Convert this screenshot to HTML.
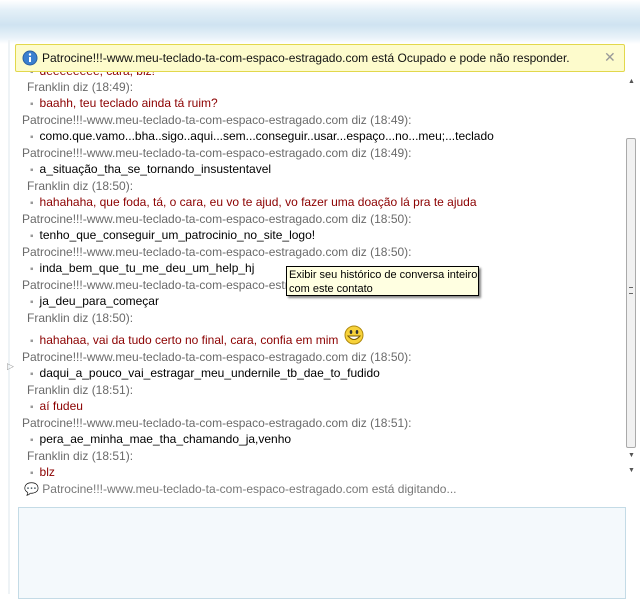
<!DOCTYPE html>
<html><head><meta charset="utf-8"><style>
body{margin:0;width:640px;height:594px;overflow:hidden;background:#fff;font-family:"Liberation Sans",sans-serif;font-size:12px;position:relative}
.top{position:absolute;left:0;top:0;width:640px;height:44px;background:linear-gradient(#fff 0,#e4f0f8 10px,#cfe3f1 25px,#eaf3f9 38px,#fff 44px)}
.lb{position:absolute;left:8px;top:40px;width:2px;height:554px;background:#eef3f6}
.l{position:absolute;white-space:nowrap;line-height:15px}
.h{color:#6a6a6a}
.m{left:30px;color:#000}
.m i{font-style:normal;color:#999;margin-right:6px;font-size:10px}
.r{color:#8b0000}
.bar{position:absolute;left:15px;top:44px;width:608px;height:26px;background:#fdfbcc;border:1px solid #e2d84c;border-radius:2px}
.scroll{position:absolute;left:626px;top:138px;width:8px;height:308px;background:#f1f1f1;border:1px solid #aaa;border-radius:2px}
.tip{position:absolute;left:286px;top:266px;width:193px;height:30px;background:#ffffe1;border:1px solid #000;box-shadow:2px 2px 2px #888;font-size:11px;line-height:14px;padding:1px 0 0 2px;box-sizing:border-box}
.inp{position:absolute;left:18px;top:507px;width:606px;height:90px;background:#f4f9fc;border:1px solid #c4dbe6}
</style></head><body>
<div class="top"></div><div class="lb"></div>
<div class="l m r" style="top:64px"><i>▪</i>deeeeeeee, cara, blz!</div>
<div class="bar"><svg style="position:absolute;left:6px;top:5px" width="16" height="16"><circle cx="8" cy="8" r="7" fill="#3b7fd0" stroke="#2a5fa0"/><rect x="7" y="7" width="2" height="5" fill="#fff"/><circle cx="8" cy="4.5" r="1.2" fill="#fff"/></svg><span style="position:absolute;left:26px;top:6px;color:#111">Patrocine!!!-www.meu-teclado-ta-com-espaco-estragado.com está Ocupado e pode não responder.</span><span style="position:absolute;left:588px;top:4px;color:#999;font-size:14px">✕</span></div>
<div class="l h" style="left:27px;top:80px">Franklin diz (18:49):</div>
<div class="l m r" style="top:96px"><i>▪</i>baahh, teu teclado ainda tá ruim?</div>
<div class="l h" style="left:22px;top:113px">Patrocine!!!-www.meu-teclado-ta-com-espaco-estragado.com diz (18:49):</div>
<div class="l m" style="top:129px"><i>▪</i>como.que.vamo...bha..sigo..aqui...sem...conseguir..usar...espaço...no...meu;...teclado</div>
<div class="l h" style="left:22px;top:146px">Patrocine!!!-www.meu-teclado-ta-com-espaco-estragado.com diz (18:49):</div>
<div class="l m" style="top:162px"><i>▪</i>a_situação_tha_se_tornando_insustentavel</div>
<div class="l h" style="left:27px;top:179px">Franklin diz (18:50):</div>
<div class="l m r" style="top:195px"><i>▪</i>hahahaha, que foda, tá, o cara, eu vo te ajud, vo fazer uma doação lá pra te ajuda</div>
<div class="l h" style="left:22px;top:212px">Patrocine!!!-www.meu-teclado-ta-com-espaco-estragado.com diz (18:50):</div>
<div class="l m" style="top:228px"><i>▪</i>tenho_que_conseguir_um_patrocinio_no_site_logo!</div>
<div class="l h" style="left:22px;top:245px">Patrocine!!!-www.meu-teclado-ta-com-espaco-estragado.com diz (18:50):</div>
<div class="l m" style="top:261px"><i>▪</i>inda_bem_que_tu_me_deu_um_help_hj</div>
<div class="l h" style="left:22px;top:278px">Patrocine!!!-www.meu-teclado-ta-com-espaco-estragado.com diz (18:50):</div>
<div class="l m" style="top:294px"><i>▪</i>ja_deu_para_começar</div>
<div class="l h" style="left:27px;top:311px">Franklin diz (18:50):</div>
<div class="l m r" style="top:333px"><i>▪</i>hahahaa, vai da tudo certo no final, cara, confia em mim</div>
<svg style="position:absolute;left:344px;top:325px" width="20" height="20"><circle cx="10" cy="10" r="9" fill="#f7d23a" stroke="#b08a10"/><ellipse cx="7" cy="7" rx="1.3" ry="2" fill="#333"/><ellipse cx="13" cy="7" rx="1.3" ry="2" fill="#333"/><path d="M4 11 Q10 18 16 11 Z" fill="#fff" stroke="#7a5a00"/></svg>
<div class="l h" style="left:22px;top:350px">Patrocine!!!-www.meu-teclado-ta-com-espaco-estragado.com diz (18:50):</div>
<div class="l m" style="top:366px"><i>▪</i>daqui_a_pouco_vai_estragar_meu_undernile_tb_dae_to_fudido</div>
<div class="l" style="left:7px;top:359px;color:#999;font-size:9px">▷</div>
<div class="l h" style="left:27px;top:383px">Franklin diz (18:51):</div>
<div class="l m r" style="top:399px"><i>▪</i>aí fudeu</div>
<div class="l h" style="left:22px;top:416px">Patrocine!!!-www.meu-teclado-ta-com-espaco-estragado.com diz (18:51):</div>
<div class="l m" style="top:432px"><i>▪</i>pera_ae_minha_mae_tha_chamando_ja,venho</div>
<div class="l h" style="left:27px;top:449px">Franklin diz (18:51):</div>
<div class="l m r" style="top:465px"><i>▪</i>blz</div>
<div class="l" style="left:24px;top:482px;color:#777"><span style="color:#999">💬</span> Patrocine!!!-www.meu-teclado-ta-com-espaco-estragado.com está digitando...</div>
<div class="scroll"><div style="position:absolute;left:2px;top:148px;width:4px;height:5px;border-top:1px solid #666;border-bottom:1px solid #666"></div></div>
<div class="l" style="left:628px;top:74px;font-size:7px;color:#555">▲</div>
<div class="l" style="left:628px;top:448px;font-size:7px;color:#555">▼</div>
<div class="l" style="left:628px;top:463px;font-size:7px;color:#555">▼</div>
<div class="tip">Exibir seu histórico de conversa inteiro<br>com este contato</div>
<div class="inp"></div>
</body></html>
